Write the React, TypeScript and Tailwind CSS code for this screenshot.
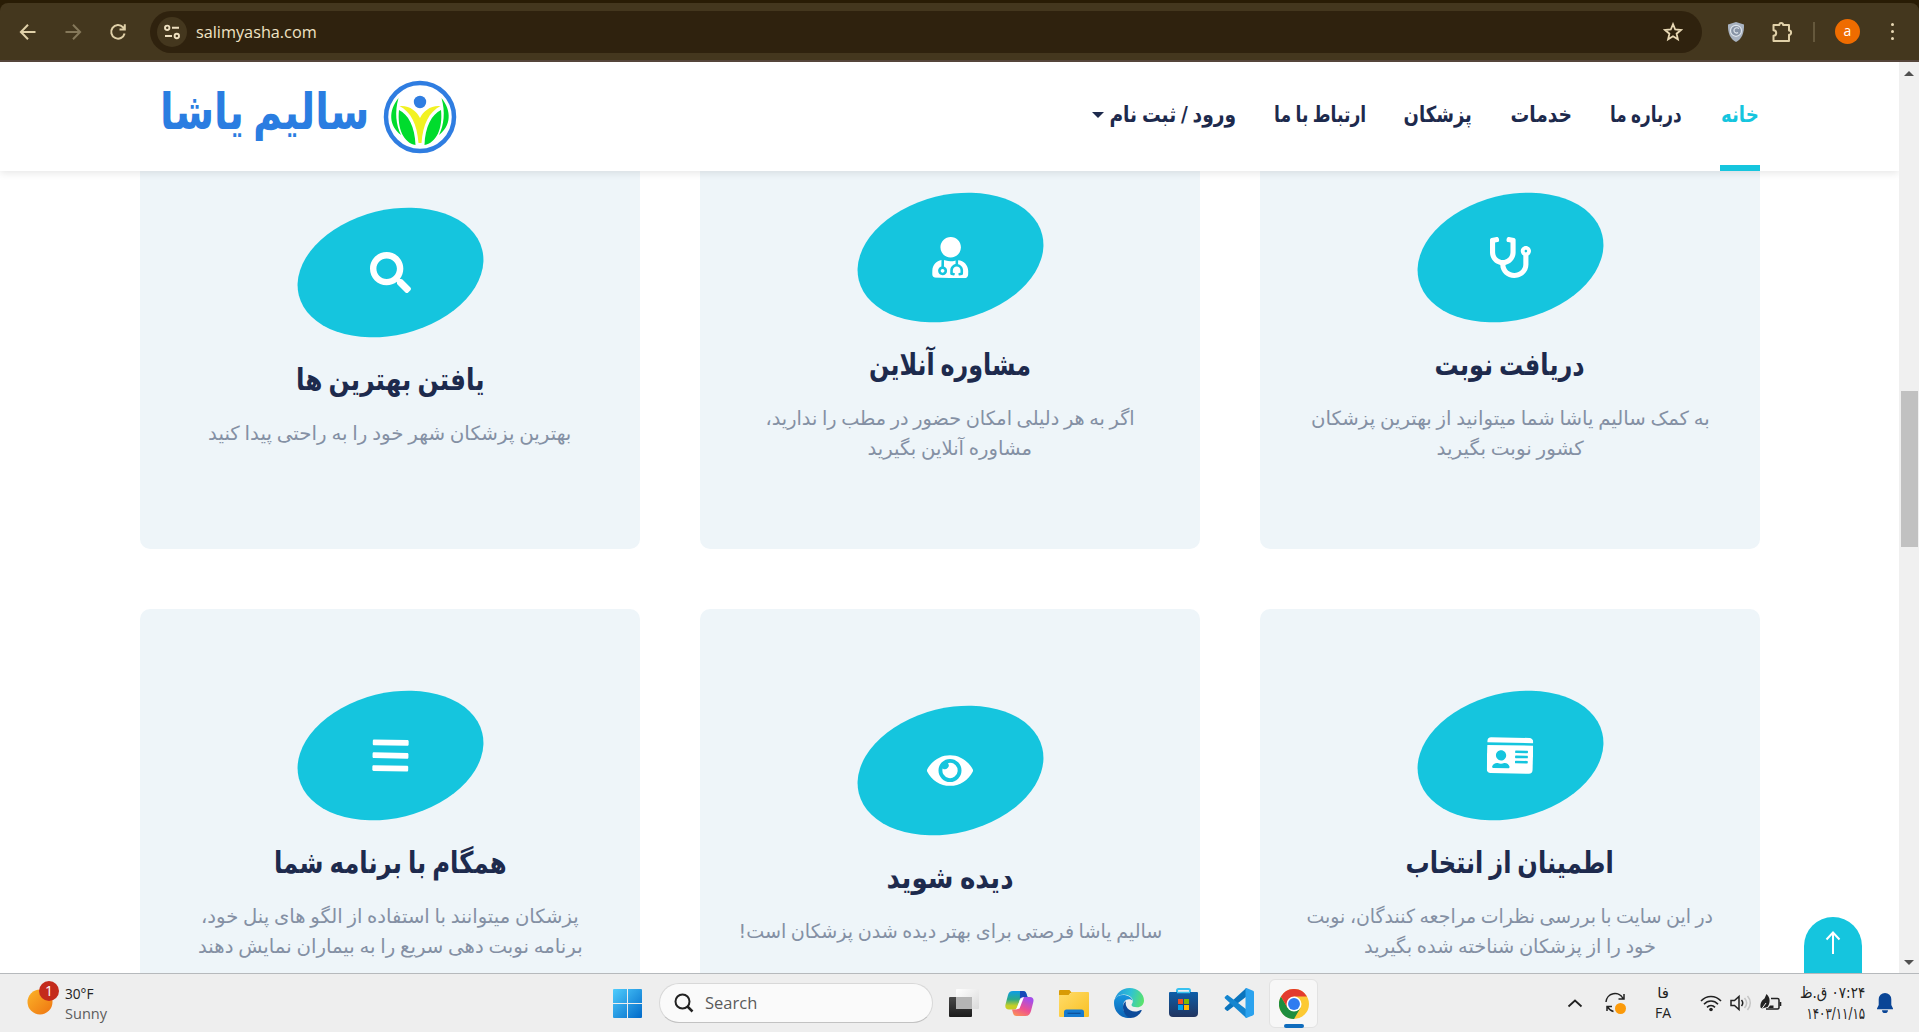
import { useLayoutEffect, useRef, useState } from 'react';
import type { ReactNode } from 'react';
import { FaBars, FaEye, FaIdCard, FaSearch, FaStethoscope, FaUserMd } from 'react-icons/fa';

const navItems = [
  { label: 'خانه', width: 38, active: true },
  { label: 'درباره ما', width: 72 },
  { label: 'خدمات', width: 62 },
  { label: 'پزشکان', width: 68 },
  { label: 'ارتباط با ما', width: 92 },
  { label: 'ورود / ثبت نام', width: 127, caret: true },
];

interface Line {
  text: string;
  width: number;
}

interface Service {
  icon: ReactNode;
  title: Line;
  lines: Line[];
}

const services: Service[] = [
  {
    icon: <FaStethoscope className="size-[41px]" />,
    title: { text: 'دریافت نوبت', width: 150 },
    lines: [
      { text: 'به کمک سالیم یاشا شما میتوانید از بهترین پزشکان', width: 399 },
      { text: 'کشور نوبت بگیرید', width: 147 },
    ],
  },
  {
    icon: <FaUserMd className="size-[41px] rotate-1" />,
    title: { text: 'مشاوره آنلاین', width: 162 },
    lines: [
      { text: 'اگر به هر دلیلی امکان حضور در مطب را ندارید،', width: 369 },
      { text: 'مشاوره آنلاین بگیرید', width: 164 },
    ],
  },
  {
    icon: <FaSearch className="size-[41px]" />,
    title: { text: 'یافتن بهترین ها', width: 189 },
    lines: [{ text: 'بهترین پزشکان شهر خود را به راحتی پیدا کنید', width: 363 }],
  },
  {
    icon: <FaIdCard className="h-[41px] w-[46px] rotate-1" />,
    title: { text: 'اطمینان از انتخاب', width: 208 },
    lines: [
      { text: 'در این سایت با بررسی نظرات مراجعه کنندگان، نوبت', width: 407 },
      { text: 'خود را از پزشکان شناخته شده بگیرید', width: 292 },
    ],
  },
  {
    icon: <FaEye className="h-[41px] w-[46px]" />,
    title: { text: 'دیده شوید', width: 127 },
    lines: [{ text: 'سالیم یاشا فرصتی برای بهتر دیده شدن پزشکان است!', width: 424 }],
  },
  {
    icon: <FaBars className="size-[41px] rotate-1" />,
    title: { text: 'همگام با برنامه شما', width: 233 },
    lines: [
      { text: 'پزشکان میتوانند با استفاده از الگو های پنل خود،', width: 378 },
      { text: 'برنامه نوبت دهی سریع را به بیماران نمایش دهند', width: 385 },
    ],
  },
];

// Keeps a single line at a fixed width, whatever font it ends up in
function FitText({ text, width }: Line) {
  const ref = useRef<HTMLSpanElement>(null);
  const [scale, setScale] = useState(1);

  useLayoutEffect(() => {
    if (ref.current) setScale(width / ref.current.offsetWidth);
  }, [text, width]);

  return (
    <span className="flex justify-center" style={{ width }}>
      <span ref={ref} className="shrink-0 whitespace-nowrap" style={{ transform: `scaleX(${scale})` }}>
        {text}
      </span>
    </span>
  );
}

function BrowserBar() {
  return (
    <div className="h-[62px] shrink-0 bg-[#291c05] pt-[3px]">
      <div className="flex h-[59px] items-center rounded-t-lg border-b-2 border-[#55453b] bg-[#44371e] pl-[18px] text-[#e0d0a8]">
        <svg className="size-5" viewBox="0 0 20 20" fill="none" stroke="currentColor" strokeWidth="2">
          <path d="M17.5 10H3M10 2.8 2.9 10l7.1 7.2" />
        </svg>
        <svg className="ml-[25px] size-5 text-[#85785a]" viewBox="0 0 20 20" fill="none" stroke="currentColor" strokeWidth="2">
          <path d="M2.5 10H17M10 2.8l7.1 7.2-7.1 7.2" />
        </svg>
        <svg className="ml-[25px] size-5" viewBox="0 0 20 20" fill="none" stroke="currentColor" strokeWidth="2">
          <path d="M16.6 11.5A6.8 6.8 0 1 1 15 5.2l1.7 1.9M16.8 2.2v5.2h-5.3" />
        </svg>
        <div className="ml-[22px] flex h-[42px] w-[1552px] items-center rounded-full bg-[#2f220e] pl-[7px] pr-[19px]">
          <span className="flex size-[30px] items-center justify-center rounded-full bg-[#44371e]">
            <svg className="size-[18px]" viewBox="0 0 18 18" fill="none" stroke="#eee0c0" strokeWidth="1.9">
              <circle cx="4.2" cy="4.8" r="2.2" />
              <path d="M9 4.8h7M2 13h7" />
              <circle cx="13.8" cy="13" r="2.2" />
            </svg>
          </span>
          <span className="ml-[9px] flex-1 pt-px font-['Open_Sans',sans-serif] text-[17px] text-[#f0e3c4]">
            <span className="inline-block origin-left scale-x-[0.955]">salimyasha.com</span>
          </span>
          <svg className="size-5" viewBox="0 0 20 20" fill="none" stroke="#e8d8b4" strokeWidth="1.8">
            <path d="m10 2.2 2.2 5.3 5.7.5-4.3 3.7 1.3 5.6L10 14.3l-4.9 3 1.3-5.6L2.1 8l5.7-.5z" />
          </svg>
        </div>
        <svg className="ml-[25px] h-[22px] w-[18px]" viewBox="0 0 18 22">
          <path d="M9 1 17 3.5c.3 8-2 14.5-8 17.5-6-3-8.3-9.5-8-17.5z" fill="#a9b3c1" />
          <circle cx="9" cy="9.8" r="5.5" fill="#8894a6" stroke="#dfe5ec" strokeWidth="1.2" />
          <path d="M12 7.5c-2-1.5-5.500-.5-5 2.500.4 2 3 2.500 4 1.500" fill="none" stroke="#dfe5ec" strokeWidth="1.2" />
        </svg>
        <svg className="ml-[25px] size-6" viewBox="0 0 24 24" fill="none" stroke="#e0d0a8" strokeWidth="2" strokeLinejoin="round">
          <path d="M3.5 5h5.800a1.900 1.900 0 0 1 3.800 0H19v5.600a2 2 0 0 1 0 4.200V21H3.5v-5.200c3.600-.3 3.600-5.300 0-5.600z" />
        </svg>
        <span className="ml-[19px] h-5 w-[2px] bg-[#65583c]" />
        <span className="ml-[20px] flex size-[25px] items-center justify-center rounded-full bg-[#ef6c00] pb-[2px] font-['Open_Sans',sans-serif] text-[14px] text-white">
          a
        </span>
        <span className="ml-[31px] flex flex-col gap-1">
          <i className="size-[3px] rounded-full bg-[#e8d8b4]" />
          <i className="size-[3px] rounded-full bg-[#e8d8b4]" />
          <i className="size-[3px] rounded-full bg-[#e8d8b4]" />
        </span>
      </div>
    </div>
  );
}

function LogoMark() {
  return (
    <svg className="h-[74px] w-[74px]" viewBox="0 0 74 74">
      <circle cx="37" cy="37" r="34" fill="#fff" stroke="#2f7de1" strokeWidth="4.5" />
      <circle cx="37" cy="22" r="6.2" fill="#2f7de1" />
      <path d="M15.5 18C5 31 6 46 18 55c-5-10-6.500-23-2.500-37zM58.500 18C69 31 68 46 56 55c5-10 6.500-23 2.500-37z" fill="#00dc2d" />
      <path d="M16 30c9 4 16 17 16.500 35C21 63 14 49 16 30zM58 30c-9 4-16 17-16.500 35C53 63 60 49 58 30z" fill="#00dc2d" />
      <path d="M16.500 26C26 25 34 31 37 38c3-7 11-13 20.500-12C46 32 40 44 38.500 63h-3C34 44 28 32 16.500 26z" fill="#f2f222" />
    </svg>
  );
}

function Header() {
  return (
    <header className="relative z-10 flex h-[109px] justify-between bg-white pl-[160px] pr-[139px] shadow-[0_2px_8px_rgba(0,0,0,0.1)]">
      <div className="flex items-center">
        <span className="pb-[10px] text-[50px] leading-[70px] font-bold text-[#2a7de1] [word-spacing:-6px]">
          <FitText text="سالیم یاشا" width={209} />
        </span>
        <span className="ml-[14px]">
          <LogoMark />
        </span>
      </div>
      <nav className="flex gap-[38px] text-[22px] font-bold text-[#1d2a4d] [word-spacing:-2px]" dir="rtl">
        {navItems.map((item) => (
          <a
            key={item.label}
            className={
              item.active
                ? 'flex w-10 items-center justify-center border-b-[6px] border-[#15c5de] pt-[2px] text-[#15c5de]'
                : 'flex items-center pb-1'
            }
          >
            <FitText text={item.label} width={item.width} />
            {item.caret && (
              <i className="mr-[5px] border-x-[6px] border-t-[6px] border-x-transparent border-t-[#1d2a4d]" />
            )}
          </a>
        ))}
      </nav>
    </header>
  );
}

function ServiceCard({ icon, title, lines }: Service) {
  return (
    <div className="flex flex-col items-center justify-center rounded-[10px] bg-[#eef5f9]">
      <div className="relative flex h-[130px] w-[186px] items-center justify-center text-white">
        <span className="absolute top-[2.5px] left-[-1.5px] h-[125px] w-[189px] rotate-[-14deg] rounded-[50%] bg-[#15c5de]" />
        <span className="relative">{icon}</span>
      </div>
      <h3 className="mt-[20px] mb-4 text-[30px] leading-[46px] font-bold text-[#1d2a4d] [word-spacing:-3px]">
        <FitText {...title} />
      </h3>
      <p className="flex flex-col items-center pb-1 text-[19.5px] leading-[30px] text-[#8490a4] [word-spacing:-1.5px]">
        {lines.map((line) => (
          <FitText key={line.text} {...line} />
        ))}
      </p>
    </div>
  );
}

function Scrollbar() {
  return (
    <div className="flex w-5 shrink-0 flex-col items-center bg-[#f0f0f0] pt-[9px] pb-[8px]">
      <i className="border-x-[5px] border-b-[5px] border-x-transparent border-b-[#505050]" />
      <div className="mt-[315px] h-[156px] w-[17px] bg-[#c1c1c1]" />
      <i className="mt-auto border-x-[5px] border-t-[5px] border-x-transparent border-t-[#505050]" />
    </div>
  );
}

function Taskbar() {
  return (
    <div className="flex h-[59px] shrink-0 items-center border-t border-[#b6b9bc] bg-[#eeeeee] font-['Open_Sans',sans-serif] text-[#222]">
      <div className="flex w-[613px] items-center pl-[26px]">
        <svg className="mb-[7px] h-[38px] w-[34px]" viewBox="0 0 34 38">
          <defs>
            <linearGradient id="sun" x1="0" y1="0" x2="1" y2="1">
              <stop offset="0" stopColor="#fbb429" />
              <stop offset="1" stopColor="#ee7410" />
            </linearGradient>
          </defs>
          <circle cx="14" cy="21" r="12.5" fill="url(#sun)" />
          <circle cx="23" cy="10" r="10" fill="#c42b1c" />
          <text x="23" y="15" fontSize="14" fill="#fff" textAnchor="middle">
            1
          </text>
        </svg>
        <div className="ml-[5px] text-[15px] leading-5">
          <div className="origin-left scale-x-[0.91]">30°F</div>
          <div className="origin-left scale-x-[0.97] text-[#5c5c5c]">Sunny</div>
        </div>
      </div>

      <svg className="size-[29px]" viewBox="0 0 29 29">
        <defs>
          <linearGradient id="win" x1="0" y1="0" x2="1" y2="1">
            <stop offset="0" stopColor="#4fcdfd" />
            <stop offset="1" stopColor="#0069c9" />
          </linearGradient>
        </defs>
        <path d="M1 0h13v14H0V1a1 1 0 0 1 1-1zM15 0h13a1 1 0 0 1 1 1v13H15zM0 15h14v14H1a1 1 0 0 1-1-1zM15 15h14v13a1 1 0 0 1-1 1H15z" fill="url(#win)" />
      </svg>

      <div className="ml-[17px] flex h-10 w-[274px] items-center rounded-full border border-[#d8d8d8] border-b-[#c2c2c2] bg-[#fafafa] pl-[14px]">
        <svg className="size-5" viewBox="0 0 20 20" fill="none" stroke="#222" strokeWidth="2">
          <circle cx="8.5" cy="8.5" r="7" />
          <path d="m13.500 13.500 5 5" strokeWidth="2.5" />
        </svg>
        <span className="ml-[11px] pt-px text-[16.500px] text-[#5a5a5a]">Search</span>
      </div>

      <svg className="ml-[16px] size-[30px]" viewBox="0 0 30 30">
        <defs>
          <linearGradient id="tvDark" x1="0" y1="0" x2="0" y2="1">
            <stop offset="0" stopColor="#484848" />
            <stop offset="1" stopColor="#1c1c1c" />
          </linearGradient>
          <linearGradient id="tvLight" x1="0" y1="0" x2="1" y2="1">
            <stop offset="0" stopColor="#fff" />
            <stop offset="1" stopColor="#dadada" />
          </linearGradient>
        </defs>
        <rect x="0" y="9" width="23" height="20" rx="1" fill="url(#tvDark)" />
        <rect x="7" y="1" width="23" height="20" rx="1" fill="url(#tvLight)" />
        <path d="M7 9h16v12H7z" fill="#b5b5b5" />
      </svg>

      <svg className="ml-[26px] size-[29px]" viewBox="0 0 29 29">
        <defs>
          <linearGradient id="cpA" x1="0" y1="0" x2="0" y2="1">
            <stop offset="0" stopColor="#0c9ce8" />
            <stop offset="0.45" stopColor="#2aa98a" />
            <stop offset="0.8" stopColor="#c7cf26" />
          </linearGradient>
          <linearGradient id="cpB" x1="0.5" y1="0" x2="0" y2="1">
            <stop offset="0" stopColor="#a64ee8" />
            <stop offset="0.5" stopColor="#ee5190" />
            <stop offset="1" stopColor="#fd9a4c" />
          </linearGradient>
        </defs>
        <path d="M8 2h10c2 0 3 1 3.500 3l1 3h-4c-2.500 0-3.500 1.500-4 3.500L13 17c-.6 2.200-1.800 3.500-4 3.500H4c-3 0-4.200-2-3.500-5L3 6c.8-2.700 2-4 5-4z" fill="url(#cpA)" />
        <path d="M15 2h3c2 0 3 1 3.500 3l1 3h-4c-2 0-3 1-3.600 2.500z" fill="#1648b8" />
        <path d="M20.500 27h-9c-2 0-3-1-3.500-3l-1-3.500h2.500c2.500 0 3.500-1.500 4-3.500l1.500-5.500c.6-2.200 1.800-3.500 4-3.500h6c3 0 4 2 3.300 5L26 22c-.8 3-2.500 5-5.500 5z" fill="url(#cpB)" />
        <path d="m15.500 9.500 3.500-1.500-4.500 11.500-3.500 1z" fill="#fff" />
      </svg>

      <svg className="ml-[25px] h-[28px] w-[30px]" viewBox="0 0 30 28">
        <defs>
          <linearGradient id="folder" x1="0" y1="0" x2="1" y2="1">
            <stop offset="0" stopColor="#ffdc6a" />
            <stop offset="1" stopColor="#f9c023" />
          </linearGradient>
        </defs>
        <path d="M1 1h9.500L13 4h-2l-1 3H0V2a1 1 0 0 1 1-1z" fill="#d89b05" />
        <path d="M0 6h9.500L13 3h16a1 1 0 0 1 1 1v23a1 1 0 0 1-1 1H1a1 1 0 0 1-1-1z" fill="url(#folder)" />
        <path d="M5 28v-5a2.500 2.500 0 0 1 2.500-2.500h15A2.500 2.500 0 0 1 25 23v5z" fill="#157ad0" />
        <path d="M8.500 24.300h13" stroke="#0c4f97" strokeWidth="1.2" />
      </svg>

      <svg className="ml-[25px] size-[30px]" viewBox="0 0 30 30">
        <defs>
          <linearGradient id="edgeTop" x1="0" y1="0.4" x2="1" y2="0.6">
            <stop offset="0" stopColor="#2397dd" />
            <stop offset="0.5" stopColor="#2fc2d4" />
            <stop offset="1" stopColor="#5be36a" />
          </linearGradient>
          <linearGradient id="edgeSide" x1="0" y1="0" x2="0" y2="1">
            <stop offset="0" stopColor="#1897df" />
            <stop offset="1" stopColor="#0c62b5" />
          </linearGradient>
        </defs>
        <path d="M.500 12.500C2 5 8 0 15.500 0 24 0 30 6 30 12.500c0 4-3 6.800-7 6.800-3 0-5.500-1-5.500-2.300 0-1 1.300-1.500 1.300-4 0-3.500-4-6.500-9-6.500S1.500 9.500.500 12.500z" fill="url(#edgeTop)" />
        <path d="M.300 12C2 8.500 5.500 7 9 7c5 0 9 2.500 9.500 5.500-1-.8-2-1.200-3.500-1.200-4 0-6 3.500-6 7.500 0 5.500 4 9.500 8 11C7 31.500 0 23.500 0 15c0-1 .1-2 .3-3z" fill="url(#edgeSide)" />
        <path d="M12 13.200c-1.500 4.800 2.500 10.300 9 10.300 2.500 0 4.300-.7 5.700-1.500.8-.3 1.200.2.900.8C25.500 27 21.500 30 16.500 30 12 29 8.800 24 9 18.700c.1-2.500 1.300-4.500 3-5.500z" fill="#0c4a99" />
      </svg>

      <svg className="ml-[25px] size-[30px]" viewBox="0 0 30 30">
        <defs>
          <linearGradient id="store" x1="0" y1="0" x2="0" y2="1">
            <stop offset="0" stopColor="#0d5ea9" />
            <stop offset="1" stopColor="#21345f" />
          </linearGradient>
        </defs>
        <path d="M8 5V2.500A1.500 1.500 0 0 1 9.500 1h10A1.500 1.500 0 0 1 21 2.500V5" fill="none" stroke="#37c1f0" strokeWidth="2" />
        <path d="M0 5a1 1 0 0 1 1-1h27a1 1 0 0 1 1 1v20a4 4 0 0 1-4 4H4a4 4 0 0 1-4-4z" fill="url(#store)" />
        <path d="M8 4.500h13" stroke="#37c1f0" strokeWidth="1.5" />
        <path d="M9 11h5v5H9z" fill="#f25022" />
        <path d="M15 11h5v5h-5z" fill="#7fba00" />
        <path d="M9 17h5v5H9z" fill="#00a4ef" />
        <path d="M15 17h5v5h-5z" fill="#ffb900" />
      </svg>

      <svg className="ml-[25px] size-[30px]" viewBox="0 0 30 30">
        <path d="M22 .3 1 19.500c-.5.500-.5 1.200 0 1.700l1.500 1.400c.4.400 1 .4 1.500.1L27 5z" fill="#0a74bd" />
        <path d="M22 29.700 1 10.500c-.5-.5-.5-1.200 0-1.700l1.500-1.400c.4-.4 1-.4 1.500-.1L27 25z" fill="#1485cf" />
        <path d="m22.500 0 6.500 2.800c.6.300 1 .8 1 1.500v21.400c0 .7-.4 1.200-1 1.500L22.500 30c-.8.100-1-.3-1-1V1c0-.7.300-1.100 1-1z" fill="#2ba2ee" />
      </svg>

      <div className="ml-[15px] flex h-[49px] w-[49px] flex-col items-center rounded-md border border-[#e2e2e2] bg-[#f7f7f7] pt-[9px]">
        <svg className="size-[30px] shrink-0" viewBox="0 0 48 48">
          <circle cx="24" cy="24" r="24" fill="#fcc934" />
          <path d="M24 24 13.600 30 3.200 12A24 24 0 0 0 24 48l10.400-18z" fill="#1e8e3e" />
          <path d="M24 12h20.800A24 24 0 0 0 3.200 12l10.400 18z" fill="#e33b2e" />
          <circle cx="24" cy="24" r="12" fill="#fff" />
          <circle cx="24" cy="24" r="9.5" fill="#2f7cf0" />
        </svg>
        <i className="mt-[5px] h-1 w-5 shrink-0 rounded-full bg-[#0f6cbd]" />
      </div>

      <div className="ml-auto flex items-center pr-[25px]">
        <svg className="h-[9px] w-4" viewBox="0 0 16 9" fill="none" stroke="#222" strokeWidth="1.8">
          <path d="m1.500 7.500 6.500-6 6.500 6" />
        </svg>
        <svg className="ml-[20px] size-6" viewBox="0 0 24 24" fill="none" stroke="#222" strokeWidth="1.5">
          <path d="M3 11a9 9 0 0 1 17-3.500M21 3v5h-5.500M4 20v-4.500h5M4.500 15.500a9 9 0 0 0 6 5" />
          <circle cx="17.5" cy="17.5" r="5.5" fill="#fb9a0a" stroke="none" />
        </svg>
        <div className="ml-[26px] flex w-5 flex-col items-center leading-5">
          <span className="font-['DejaVu_Sans',sans-serif] text-[15px]">فا</span>
          <span className="text-[14px]">FA</span>
        </div>
        <svg className="ml-[27px] h-[18px] w-[22px]" viewBox="0 0 22 18" fill="none" stroke="#222" strokeWidth="1.6">
          <path d="M1 7c5.500-6 14.500-6 20 0M4 10.200c4-4.200 10-4.200 14 0M7 13.400c2.300-2.500 5.700-2.500 8 0" />
          <circle cx="11" cy="15.5" r="1.8" fill="#222" stroke="none" />
        </svg>
        <svg className="ml-[8px] h-[18px] w-[22px]" viewBox="0 0 22 18" fill="none" stroke="#222" strokeWidth="1.5">
          <path d="M1 6.500v5h3.500l4.500 4V2.500l-4.500 4zM11.500 6c1.500 1.800 1.500 4.200 0 6" />
          <path d="M14.500 4c2.600 3 2.600 7 0 10M17.500 2c3.700 4 3.700 10 0 14" stroke="#c4c4c4" />
        </svg>
        <svg className="ml-[8px] h-[20px] w-[22px]" viewBox="0 0 22 20">
          <path d="M11 5.500h6.500a1.500 1.500 0 0 1 1.500 1.500v7.500a1.500 1.500 0 0 1-1.500 1.500H6" fill="none" stroke="#222" strokeWidth="1.5" />
          <path d="M19.500 9h1.800v4h-1.800M10 12.500h3.500V15H8z" fill="#222" />
          <path d="M6.500 1c4 3.500 4 9 1 13L2 15.500.5 14.500C0 10 2 7 4.500 5.500z" fill="#222" />
          <path d="m2 15.500 4-5.500" stroke="#eee" />
        </svg>
        <div className="ml-[16px] flex w-[67px] flex-col items-end pb-px font-['DejaVu_Sans',sans-serif] text-[16px] leading-[21px]">
          <span dir="rtl">
            <FitText text="۰۷:۲۴ ق.ظ" width={65} />
          </span>
          <FitText text="۱۴۰۳/۱۱/۱۵" width={59} />
        </div>
        <svg className="ml-[11px] h-5 w-[18px]" viewBox="0 0 18 20" fill="#0a4596">
          <path d="M9 0a6.300 6.300 0 0 1 6.300 6.300V12l1.700 3.500v.8H1v-.8L2.700 12V6.300A6.300 6.300 0 0 1 9 0zM6 17.200h6a3 3 0 0 1-6 0z" />
        </svg>
      </div>
    </div>
  );
}

export default function App() {
  return (
    <div className="flex h-[1032px] w-[1919px] flex-col overflow-hidden bg-white font-['DejaVu_Sans',sans-serif]">
      <BrowserBar />
      <div className="flex h-[911px] shrink-0">
        <div className="relative w-[1899px] overflow-hidden">
          <Header />
          <main className="-mt-[60px] grid auto-rows-[438px] grid-cols-[500px_500px_500px] gap-[60px] pr-[139px]" dir="rtl">
            {services.map((service) => (
              <ServiceCard key={service.title.text} {...service} />
            ))}
          </main>
          {/* Back to top */}
          <button className="absolute top-[855px] left-[1804px] flex h-[72px] w-[58px] justify-center rounded-t-full bg-[#15c5de] pt-[14px]">
            <svg className="h-[24px] w-4" viewBox="0 0 16 24" fill="none" stroke="#fff" strokeWidth="2">
              <path d="M8 23V1.500M1.500 8.500 8 1.500l6.500 7" />
            </svg>
          </button>
        </div>
        <Scrollbar />
      </div>
      <Taskbar />
    </div>
  );
}
